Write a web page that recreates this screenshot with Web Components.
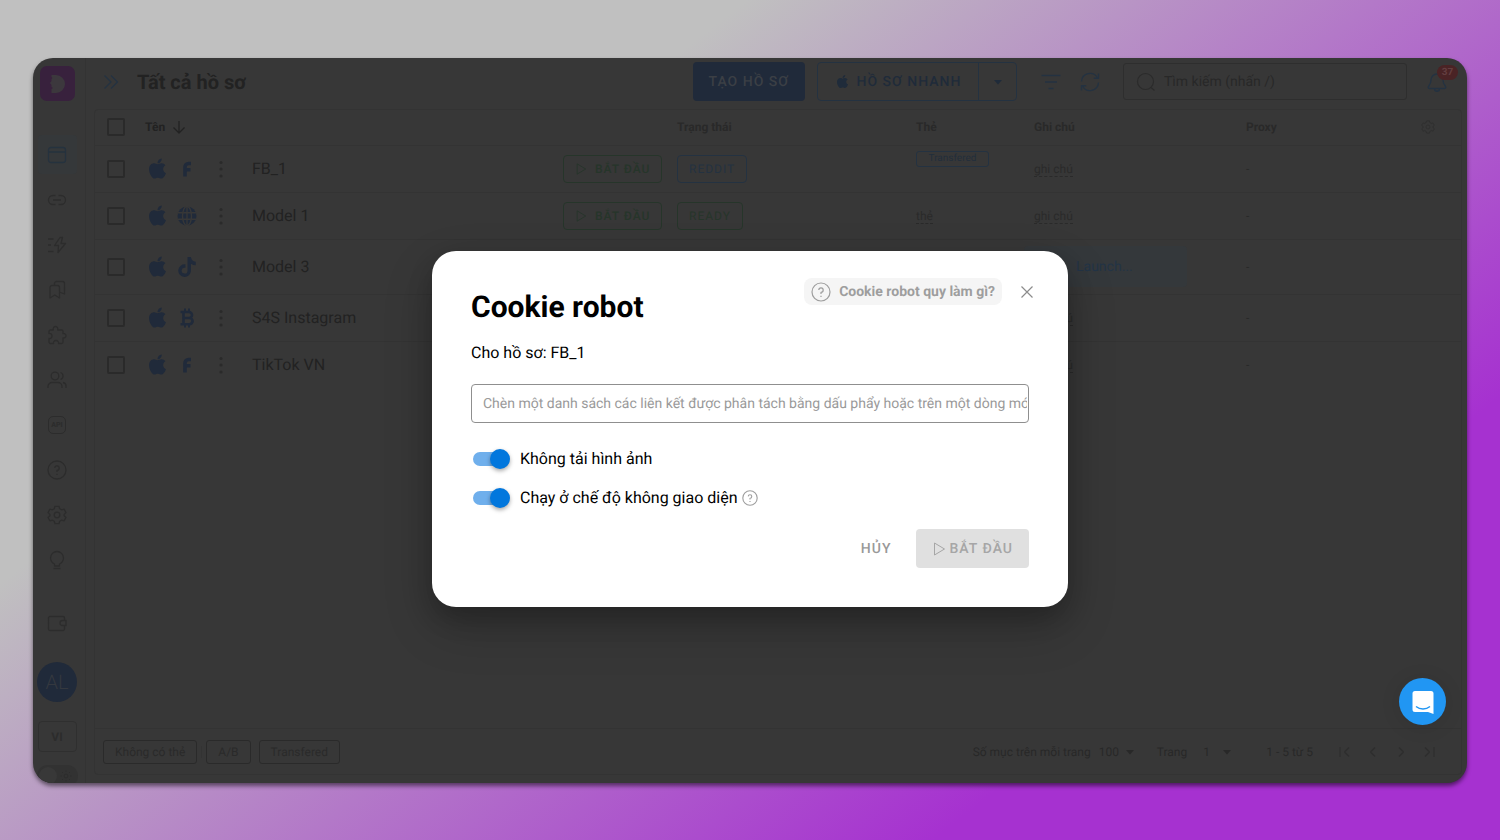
<!DOCTYPE html>
<html lang="vi">
<head>
<meta charset="UTF-8">
<meta name="viewport" content="width=device-width, initial-scale=1">
<title>Cookie robot</title>
<style>
  :root {
    --surface: #373737;
    --line: #333333;
    --outline: #2a2a2a;
    --text: #222222;
    --text-soft: #282828;
    --brand: #202a3a;
    --brand-line: #243241;
    --success: #26352a;
    --accent: #0277dd;
    --muted: #9e9e9e;
  }
  * { box-sizing: border-box; }
  body {
    margin: 0;
    height: 100vh;
    padding: 58px 33px 57px;
    font-family: Roboto, "Noto Sans", sans-serif;
    text-rendering: geometricPrecision;
    color: var(--text);
    background: linear-gradient(142deg, #c0c0c0 29%, #a631d0 78%);
  }
</style>
</head>
<body>
<app-window></app-window>

<script>
const ICONS = {
  window: ['0 0 20 20', '<rect x="1.5" y="2.5" width="17" height="15" rx="2.5"/><path d="M1.5 7h17"/>'],
  link: ['0 0 20 20', '<path d="M8.500 5.500H6a4.500 4.500 0 0 0 0 9h2.500M11.500 5.500H14a4.500 4.500 0 0 1 0 9h-2.500M6 10h8"/>'],
  bolt: ['0 0 20 20', '<path d="M13 2.500 7.500 10.500h4L11 17.500l7.500-9h-4.500l1.500-6zM1 4h5.500M1 10h3M1 16.500h5.500"/>'],
  bookmarks: ['0 0 20 20', '<path d="M3 7.500a2 2 0 0 1 2-2h5.500a2 2 0 0 1 2 2V18l-4.700-3L3 18zM7.500 5.500v-2a2 2 0 0 1 2-2h6a2 2 0 0 1 2 2V14l-5-2"/>'],
  puzzle: ['0 0 20 20', '<path d="M2 6.500a1.500 1.500 0 0 1 1.500-1.500H6.300c-.5-2 .5-3.500 2.200-3.500s2.700 1.500 2.200 3.500h3.800A1.500 1.500 0 0 1 16 6.500v2c1.800-.2 3 .7 3 2.200s-1.200 2.400-3 2.200v4.100a1.500 1.500 0 0 1-1.500 1.500h-3c.3-1.800-.6-3-2.500-3s-2.800 1.200-2.500 3h-3A1.500 1.500 0 0 1 2 17v-3.500c2 .2 3-.8 3-2.500s-1-2.700-3-2.500z"/>'],
  users: ['0 0 20 20', '<circle cx="8" cy="6" r="3.800"/><path d="M1 18v-1.500a4 4 0 0 1 4-4h6a4 4 0 0 1 4 4V18M13.500 2.500a3.700 3.700 0 0 1 0 7M16 12.500a3.700 3.700 0 0 1 3 4V18"/>'],
  help: ['0 0 20 20', '<circle cx="10" cy="10" r="9"/><path d="M7.800 8A2.200 2.200 0 1 1 10 10.300v1.700M10 13.700v1.300"/>'],
  gear: ['0 0 20 20', '<path d="M8 1.300h4l.7 2.500 1.800 1 2.500-.6 2 3.400-1.900 1.800v1.300l1.900 1.800-2 3.400-2.500-.7-1.800 1-.7 2.500H8l-.7-2.500-1.800-1-2.500.7-2-3.400 1.900-1.800V9.400L1 7.600l2-3.400 2.500.6 1.800-1z"/><circle cx="10" cy="10" r="2.800"/>'],
  bulb: ['0 0 20 20', '<path d="M7.500 16v-2A7 7 0 0 1 3.500 8a6.500 6.500 0 0 1 13 0 7 7 0 0 1-4 6v2zM6.500 18.500h7"/>'],
  wallet: ['0 0 20 20', '<path d="M17.500 7.500V5A1.500 1.500 0 0 0 16 3.500H3A1.500 1.500 0 0 0 1.500 5v11A1.500 1.500 0 0 0 3 17.500h13a1.500 1.500 0 0 0 1.500-1.500v-3.500M19 7.500h-3.500a2.500 2.500 0 0 0 0 5H19z"/>'],
  sun: ['0 0 12 12', '<circle cx="6" cy="6" r="2"/><path d="M6 .5v1.500M6 10v1.500M.5 6H2M10 6h1.500M2 2l1 1M9 9l1 1M2 10l1-1M9 3l1-1"/>'],
  expand: ['0 0 16 16', '<path d="m1.500 1.500 6.500 6.500-6.500 6.500M8 1.500 14.500 8 8 14.500"/>'],
  arrowDown: ['0 0 14 14', '<path d="M7 1v12M1.500 7.500 7 13l5.500-5.500"/>'],
  filter: ['0 0 20 20', '<path d="M.5 3.500h19M4 10h12M7.500 16.500h5"/>'],
  refresh: ['0 0 20 20', '<path d="M1.500 9.500A8.500 8.500 0 0 1 17.500 6M18.500 10.500A8.500 8.500 0 0 1 2.500 14M18.500 1.500V6.200h-4.700M1.500 18.500v-4.700h4.700"/>'],
  search: ['0 0 20 20', '<circle cx="9.500" cy="9.500" r="8"/><path d="m15 15.500 3.500 3"/>'],
  bell: ['0 0 20 20', '<path d="M2.500 16.500c-1.500 0-1.500-1.500-.7-2.500 1.700-2 2.200-3 2.200-6a6 6 0 0 1 12 0c0 3 .5 4 2.200 6 .8 1 .8 2.500-.7 2.500zM7.500 16.800a2.500 2.500 0 0 0 5 0"/>'],
  play: ['0 0 14 14', '<path d="M2.500 1v12L12.500 7z"/>'],
  close: ['0 0 16 16', '<path d="m2.500 2.500 11 11M13.500 2.500l-11 11"/>'],
  first: ['0 0 14 14', '<path d="M2 2v10M11 2.500 6.500 7l4.500 4.500"/>'],
  prev: ['0 0 14 14', '<path d="M9 2.500 4.500 7 9 11.500"/>'],
  next: ['0 0 14 14', '<path d="M5 2.500 9.500 7 5 11.500"/>'],
  last: ['0 0 14 14', '<path d="M12 2v10M3 2.500 7.500 7 3 11.500"/>'],
  caret: ['0 0 10 10', '<path d="M1 3h8L5 7.500z" fill="currentColor" stroke="none"/>'],
  dots: ['0 0 20 20', '<g fill="currentColor" stroke="none"><circle cx="10" cy="3.500" r="1.600"/><circle cx="10" cy="10" r="1.600"/><circle cx="10" cy="17" r="1.600"/></g>'],
  logo: ['0 0 20 20', '<path fill="currentColor" stroke="none" d="M4.500 1H9a9 9 0 0 1 0 18H4.500v-4l1.500-1-1.500-1v-2L3 9l1.500-2V5l1-1-1-1z"/>'],
  apple: ['0 0 384 512', '<path fill="currentColor" stroke="none" d="M318.7 268.7c-.2-36.7 16.400-64.400 50-84.800-18.800-26.900-47.200-41.700-84.700-44.600-35.500-2.800-74.300 20.700-88.500 20.700-15 0-49.400-19.700-76.400-19.700C63.300 141.200 4 184.800 4 273.500q0 39.300 14.400 81.200c12.800 36.700 59 126.700 107.200 125.200 25.200-.6 43-17.900 75.800-17.900 31.800 0 48.300 17.900 76.400 17.900 48.600-.7 90.400-82.500 102.600-119.300-65.200-30.700-61.700-90-61.700-91.900zm-56.600-164.200c27.300-32.400 24.800-61.900 24-72.500-24.100 1.400-52 16.400-67.900 34.900-17.500 19.800-27.800 44.300-25.600 71.900 26.100 2 49.900-11.400 69.500-34.300z"/>'],
  facebook: ['0 0 20 20', '<path d="M8 17.500V8A3.500 3.500 0 0 1 11.500 4.500H14M8 10.800h5.500" stroke-width="3.600"/>'],
  globe: ['0 0 20 20', '<circle cx="10" cy="10" r="9.500" fill="currentColor" stroke="none"/><path d="M.5 6.800h19M.5 13.200h19M10 .5v19" style="stroke:var(--surface)"/><ellipse cx="10" cy="10" rx="4.500" ry="9.500" style="stroke:var(--surface)"/>'],
  tiktok: ['0 0 448 512', '<path fill="currentColor" stroke="none" d="M448 209.900a210 210 0 0 1-122.800-39.200v178.700A162.600 162.600 0 1 1 185 188.300v89.900a74.600 74.600 0 1 0 52.200 71.200V0h88a121 121 0 0 0 1.900 22.200A122 122 0 0 0 381 102.400a121 121 0 0 0 67 20.100z"/>'],
  bitcoin: ['0 0 20 20', '<path d="M3.500 4H12a3 3 0 0 1 0 6H6.500M12 10h.5a3 3 0 0 1 0 6.200h-9M6.500 4v12" stroke-width="2.600"/><path d="M8 .5V4M12 .5V4M8 16v3.500M12 16v3.500" stroke-width="2"/>'],
  chat: ['0 0 24 24', '<path fill="#fff" stroke="none" d="M4 1h16a2.500 2.500 0 0 1 2.500 2.500V24l-5.500-2H4a2.500 2.500 0 0 1-2.500-2.500v-16A2.500 2.500 0 0 1 4 1z"/><path d="M5 16.500c4 3.300 10 3.300 14 0" stroke="#2196f3" stroke-width="1.400"/>'],
};

/**
 * Base class: attaches the open shadow root and renders the template.
 */
class BaseElement extends HTMLElement {
  constructor() {
    super();
    this.attachShadow({ mode: "open" });
  }

  connectedCallback() {
    this.shadowRoot.innerHTML = `<style>
      *, :host { box-sizing: border-box; }
      button, input, select { font: inherit; color: inherit; margin: 0; text-rendering: inherit; }
      button { background: none; border: 0; padding: 0; }
      ${this.styles()}
    </style>${this.template()}`;
  }
}

/** Inline SVG icon. Attributes: name, size, weight */
class AppIcon extends BaseElement {
  styles() {
    const size = this.getAttribute("size") || 20;
    return `
      :host { display: inline-flex; flex: none; }
      svg { width: ${size}px; height: ${size}px; fill: none; stroke: currentColor;
            stroke-width: ${this.getAttribute("weight") || "1.4"}; stroke-linejoin: round; }`;
  }
  template() {
    const [box, shape] = ICONS[this.getAttribute("name")];
    return `<svg viewBox="${box}" aria-hidden="true">${shape}</svg>`;
  }
}

/** Button. Variants: solid, small, status, link, disabled */
class AppButton extends BaseElement {
  styles() {
    return `
      :host { display: inline-flex; vertical-align: middle; }
      button {
        display: flex; align-items: center; justify-content: center; gap: 8px;
        height: 39px; padding: 0 16px; border-radius: 4px;
        font-size: 14px; font-weight: 500; letter-spacing: 1px; white-space: nowrap;
      }
      :host([variant="solid"]) button { background: var(--brand); color: #3b3f45; }
      :host([variant="small"]) button, :host([variant="status"]) button {
        height: 28px; padding: 0 11px; font-size: 12px; border: 1px solid currentColor;
      }
      :host([variant="status"]) button { font-weight: 400; }
      :host([variant="link"]) button { color: #999; }
      :host([variant="disabled"]) button { background: #e0e0e0; color: #a6a6a6; gap: 4px; }`;
  }
  template() {
    const disabled = this.getAttribute("variant") === "disabled" ? "disabled" : "";
    return `<button type="button" ${disabled}><slot></slot></button>`;
  }
}

class AppSidebar extends BaseElement {
  styles() {
    return `
      :host {
        display: flex; flex-direction: column; align-items: center; flex: none;
        width: 53px; padding: 8px 4px 0 0; overflow: hidden;
        border-right: 1px solid var(--line); color: #2c2c2c;
      }
      :host > * { flex: none; }
      .logo { display: grid; place-items: center; width: 35px; height: 35px; border-radius: 7px; background: #38213d; color: #3c383d; }
      nav { display: flex; flex-direction: column; gap: 6px; margin: 34px 0 24px; }
      a { display: grid; place-items: center; width: 39px; height: 39px; border-radius: 4px; color: inherit; text-decoration: none; }
      a.active { background: #35383a; color: #25323e; }
      .api { width: 18px; height: 18px; border: 1px solid currentColor; border-radius: 5px; font-size: 7px; font-weight: 900; line-height: 16px; text-align: center; }
      .avatar { width: 40px; height: 40px; margin: 20px 0 19px; border-radius: 50%; background: var(--brand); color: #34383f; font-size: 20px; font-weight: 300; }
      .lang { width: 39px; height: 31px; border: 1px solid #2f2f2f; border-radius: 4px; font-size: 12px; font-weight: 700; }
      .theme { display: flex; align-items: center; justify-content: space-between; width: 41px; height: 22px; margin-top: 13px; padding: 0 6px 0 2px; border-radius: 11px; background: #323232; }
      .theme::before { content: ""; width: 18px; height: 18px; border-radius: 50%; background: #383838; }`;
  }
  template() {
    const items = [
      ["window", "Hồ sơ"], ["link", "Proxy"], ["bolt", "Tự động hóa"], ["bookmarks", "Dấu trang"], ["puzzle", "Tiện ích"],
      ["users", "Nhóm"], ["api", "API"], ["help", "Trợ giúp"], ["gear", "Cài đặt"], ["bulb", "Ý tưởng"],
    ];
    const links = items.map(([icon, label], i) => `
      <a href="#${icon}" aria-label="${label}" class="${i === 0 ? "active" : ""}">
        ${icon === "api" ? '<span class="api">API</span>' : `<app-icon name="${icon}" weight="1.3"></app-icon>`}
      </a>`).join("");
    return `
      <div class="logo"><app-icon name="logo"></app-icon></div>
      <nav>${links}</nav>
      <a href="#wallet" aria-label="Ví"><app-icon name="wallet" weight="1.3"></app-icon></a>
      <button type="button" class="avatar">AL</button>
      <button type="button" class="lang">VI</button>
      <button type="button" class="theme" aria-label="Giao diện"><app-icon name="sun" size="12" weight="1"></app-icon></button>`;
  }
}

class TopBar extends BaseElement {
  styles() {
    return `
      :host { display: flex; align-items: center; height: 51px; padding: 0 20px 4px 17px; flex: none; }
      .icon { display: grid; place-items: center; color: var(--brand-line); }
      h1 { flex: 1; margin: 0 0 0 18px; font-size: 20px; line-height: 24px; font-weight: 700; }
      .split { display: flex; margin: 0 24px 0 12px; border: 1px solid var(--brand-line); border-radius: 4px; height: 39px; align-items: stretch; color: #1f2b3a; }
      .split button { display: flex; align-items: center; justify-content: center; gap: 7px; font-size: 14px; font-weight: 500; letter-spacing: 1px; }
      .quick { width: 160px; }
      .more { width: 38px; border-left: 1px solid var(--brand-line); }
      .search { display: flex; align-items: center; gap: 8px; width: 284px; height: 37px; margin: 0 20px 0 23px; padding: 0 12px; border: 1px solid #2e2e2e; border-radius: 3px; color: #2b2b2b; }
      input { flex: 1; min-width: 0; border: 0; padding: 0; background: none; font-size: 14px; outline: 0; }
      input::placeholder { color: #282828; opacity: 1; }
      .filter { margin-right: 19px; }
      .bell { position: relative; }
      .badge { position: absolute; left: 10px; top: -7px; width: 21px; height: 15px; border-radius: 8px; background: #4a2325; color: #633e40; font-size: 10px; line-height: 15px; font-weight: 700; text-align: center; }`;
  }
  template() {
    return `
      <button type="button" class="icon" aria-label="Mở rộng"><app-icon name="expand" size="16" weight="1.3"></app-icon></button>
      <h1>Tất cả hồ sơ</h1>
      <app-button variant="solid">TẠO HỒ SƠ</app-button>
      <div class="split">
        <button type="button" class="quick"><app-icon name="apple" size="15"></app-icon>HỒ SƠ NHANH</button>
        <button type="button" class="more" aria-label="Thêm"><app-icon name="caret" size="10"></app-icon></button>
      </div>
      <button type="button" class="icon filter" aria-label="Lọc"><app-icon name="filter"></app-icon></button>
      <button type="button" class="icon" aria-label="Tải lại"><app-icon name="refresh"></app-icon></button>
      <label class="search"><app-icon name="search" size="20" weight="1.2"></app-icon><input type="search" aria-label="Tìm kiếm" placeholder="Tìm kiếm (nhấn /)"></label>
      <button type="button" class="icon bell" aria-label="Thông báo"><app-icon name="bell"></app-icon><span class="badge">37</span></button>`;
  }
}

/** Table of browser profiles */
class ProfileTable extends BaseElement {
  styles() {
    return `
      :host { display: block; flex: 1; min-height: 0; overflow: hidden; }
      table { width: 100%; table-layout: fixed; border-collapse: collapse; }
      th, td { padding: 0; text-align: left; vertical-align: middle; }
      th { height: 35px; font-size: 12px; font-weight: 700; color: #292929; }
      td { height: 47px; font-size: 12px; color: var(--text-soft); }
      tr { border-bottom: 1px solid var(--line); }
      tbody tr:last-child { border: 0; }
      tr.tall td { height: 55px; }
      th span { display: flex; align-items: center; gap: 7px; }
      th .name { color: var(--text); }
      input { appearance: none; display: block; width: 18px; height: 18px; margin-left: 12px; border: 2px solid var(--outline); border-radius: 2px; }
      .os { display: flex; align-items: center; gap: 8px; padding-left: 1px; color: var(--brand); }
      .os button { display: flex; color: var(--outline); margin-left: 6px; }
      .profile { font-size: 16px; color: var(--text); }
      .start { color: var(--success); }
      .reddit { color: var(--brand-line); }
      .tag { vertical-align: top; padding-top: 5px; }
      .chip { display: block; width: 73px; height: 16px; border: 1px solid var(--brand-line); border-radius: 3px; color: #222e3b; font-size: 10px; line-height: 14px; text-align: center; }
      .edit { border-bottom: 1px dashed currentColor; color: #2a2a2a; }
      .note { display: flex; align-items: center; width: 163px; height: 41px; margin-left: -10px; padding-left: 52px; border-radius: 4px; background: #34383b; color: #233446; font-size: 14px; }
      .gear { display: flex; padding-left: 8px; color: #2e2e2e; }`;
  }
  template() {
    const edit = (text) => `<span class="edit">${text}</span>`;
    const rows = [
      { name: "FB_1", icon: "facebook", status: "REDDIT", tone: "reddit", tag: '<span class="chip">Transfered</span>' },
      { name: "Model 1", icon: "globe", status: "READY", tone: "start", tag: edit("thẻ") },
      { name: "Model 3", icon: "tiktok", note: '<span class="note">Launch...</span>' },
      { name: "S4S Instagram", icon: "bitcoin" },
      { name: "TikTok VN", icon: "facebook" },
    ];
    const body = rows.map((row, i) => `
      <tr class="${row.note ? "tall" : ""}">
        <td><input type="checkbox" aria-label="Chọn ${row.name}"></td>
        <td><div class="os">
          <app-icon name="apple" size="23"></app-icon><app-icon name="${row.icon}" size="20"></app-icon>
          <button type="button" aria-label="Menu ${row.name}"><app-icon name="dots" size="20"></app-icon></button>
        </div></td>
        <td class="profile">${row.name}</td>
        <td>${row.status ? '<app-button variant="small" class="start"><app-icon name="play" size="12" weight="1"></app-icon>BẮT ĐẦU</app-button>' : ""}</td>
        <td>${row.status ? `<app-button variant="status" class="${row.tone}">${row.status}</app-button>` : ""}</td>
        <td class="${i === 0 ? "tag" : ""}">${row.tag || ""}</td>
        <td>${row.note || edit("ghi chú")}</td>
        <td>-</td>
        <td></td>
      </tr>`).join("");
    return `
      <table>
        <colgroup>
          <col style="width:50px"><col style="width:107px"><col><col style="width:114px"><col style="width:239px">
          <col style="width:118px"><col style="width:212px"><col style="width:167px"><col style="width:48px">
        </colgroup>
        <thead><tr>
          <th><input type="checkbox" aria-label="Chọn tất cả"></th>
          <th><span class="name">Tên <app-icon name="arrowDown" size="14" weight="1.3"></app-icon></span></th>
          <th></th><th></th><th>Trạng thái</th><th>Thẻ</th><th>Ghi chú</th><th>Proxy</th>
          <th><button type="button" class="gear" aria-label="Cột"><app-icon name="gear" size="14" weight="1.2"></app-icon></button></th>
        </tr></thead>
        <tbody>${body}</tbody>
      </table>`;
  }
}

/** Tag filters and pagination under the table */
class TableFooter extends BaseElement {
  styles() {
    return `
      :host { display: flex; align-items: center; flex: none; height: 46px; padding: 0 22px 0 8px; border-top: 1px solid var(--line); font-size: 12px; color: var(--text-soft); }
      .chip { height: 24px; padding: 0 11px; border: 1px solid var(--outline); border-radius: 3px; color: #2a2a2a; }
      .line { width: 1px; height: 12px; margin: 0 4px; background: var(--line); }
      .chip + .chip { margin-left: 8px; }
      .pager { display: flex; align-items: center; margin-left: auto; }
      .select { display: flex; align-items: center; justify-content: space-between; width: 36px; margin: 0 22px 0 8px; }
      .page { width: 29px; margin: 0 34px 0 16px; }
      select { appearance: none; border: 0; padding: 0; background: none; }
      .range { margin-right: 22px; }
      .steps { display: flex; gap: 8px; color: #2e2e2e; }
      .steps button { display: grid; place-items: center; width: 20px; height: 20px; }`;
  }
  template() {
    const step = (name, label) => `<button type="button" aria-label="${label}"><app-icon name="${name}" size="14" weight="1.2"></app-icon></button>`;
    return `
      <button type="button" class="chip">Không có thẻ</button>
      <span class="line"></span>
      <button type="button" class="chip">A/B</button>
      <button type="button" class="chip">Transfered</button>
      <div class="pager">
        <label for="size">Số mục trên mỗi trang</label>
        <span class="select"><select id="size"><option>100</option></select><app-icon name="caret" size="10"></app-icon></span>
        <label for="page">Trang</label>
        <span class="select page"><select id="page"><option>1</option></select><app-icon name="caret" size="10"></app-icon></span>
        <span class="range">1 - 5 từ 5</span>
        <div class="steps">${step("first", "Trang đầu")}${step("prev", "Trang trước")}${step("next", "Trang sau")}${step("last", "Trang cuối")}</div>
      </div>`;
  }
}

/** Switch with a slotted label */
class ToggleSwitch extends BaseElement {
  styles() {
    return `
      :host { display: block; }
      label { display: flex; align-items: center; gap: 10px; height: 39px; font-size: 16px; }
      input { appearance: none; display: grid; align-items: center; width: 37px; height: 20px; margin-left: 2px; }
      input::before, input::after { content: ""; grid-area: 1 / 1; }
      input::before { width: 34px; height: 14px; border-radius: 7px; background: #6fafec; }
      input::after { width: 20px; height: 20px; border-radius: 50%; background: var(--accent); box-shadow: 0 2px 4px rgba(0, 0, 0, .35); }
      input:checked::after { justify-self: end; }
      .text { display: flex; align-items: center; gap: 4px; }`;
  }
  template() {
    return `<label><input type="checkbox" role="switch" checked><span class="text"><slot></slot></span></label>`;
  }
}

class CookieDialog extends BaseElement {
  styles() {
    return `
      :host { position: absolute; inset: 0; display: grid; place-items: center; padding-top: 17px; }
      section { width: 636px; max-width: 100%; padding: 27px 39px 39px; border-radius: 24px; background: #fff; color: #000; box-shadow: 0 11px 24px rgba(0, 0, 0, .2), 0 20px 50px rgba(0, 0, 0, .2); }
      header { display: flex; align-items: flex-start; margin-right: -6px; }
      h2 { flex: 1; margin: 10px 0 0; font-size: 30px; line-height: 40px; font-weight: 700; }
      .help { display: flex; align-items: center; gap: 8px; height: 27px; padding: 0 7px; border-radius: 8px; background: #f5f5f5; color: var(--muted); font-size: 14px; font-weight: 700; }
      .close { display: grid; place-items: center; height: 27px; margin-left: 17px; color: #8c8c8c; }
      p { margin: 13px 0 19px; font-size: 16px; line-height: 24px; }
      .links { display: block; width: 100%; height: 39px; padding: 0 1px 0 11px; border: 1px solid #8f8f8f; border-radius: 4px; font-size: 14px; margin-bottom: 16px; }
      .links::placeholder { color: #9a9a9a; opacity: 1; }
      .hint { color: var(--muted); }
      footer { display: flex; justify-content: flex-end; gap: 8px; margin-top: 12px; }`;
  }
  template() {
    return `
      <section role="dialog" aria-labelledby="title">
        <header>
          <h2 id="title">Cookie robot</h2>
          <button type="button" class="help"><app-icon name="help" size="20" weight="1.2"></app-icon>Cookie robot quy làm gì?</button>
          <button type="button" class="close" aria-label="Đóng"><app-icon name="close" size="16" weight="1.2"></app-icon></button>
        </header>
        <p>Cho hồ sơ: FB_1</p>
        <input class="links" type="text" aria-label="Danh sách liên kết" placeholder="Chèn một danh sách các liên kết được phân tách bằng dấu phẩy hoặc trên một dòng mới">
        <toggle-switch>Không tải hình ảnh</toggle-switch>
        <toggle-switch>Chạy ở chế độ không giao diện <app-icon class="hint" name="help" size="16"></app-icon></toggle-switch>
        <footer>
          <app-button variant="link">HỦY</app-button>
          <app-button variant="disabled"><app-icon name="play" size="14" weight="1"></app-icon>BẮT ĐẦU</app-button>
        </footer>
      </section>`;
  }
}

class ChatLauncher extends BaseElement {
  styles() {
    return `
      :host { position: absolute; right: 21px; bottom: 58px; }
      button { display: grid; place-items: center; width: 47px; height: 47px; border-radius: 50%; background: #2196f3; box-shadow: 0 2px 20px rgba(0, 0, 0, .1); }`;
  }
  template() {
    return `<button type="button" aria-label="Trò chuyện"><app-icon name="chat" size="24"></app-icon></button>`;
  }
}

class AppWindow extends BaseElement {
  styles() {
    return `
      :host {
        position: relative; display: flex; height: 100%; overflow: hidden;
        border-radius: 20px; background: var(--surface); box-shadow: 0 3px 4px rgba(0, 0, 0, .5);
      }
      main { display: flex; flex-direction: column; flex: 1; min-width: 0; padding-bottom: 8px; }
      .card { display: flex; flex-direction: column; flex: 1; min-height: 0; margin: 0 5px 0 8px; border: 1px solid var(--line); border-radius: 4px; }`;
  }
  template() {
    return `
      <app-sidebar></app-sidebar>
      <main>
        <top-bar></top-bar>
        <div class="card">
          <profile-table></profile-table>
          <table-footer></table-footer>
        </div>
      </main>
      <cookie-dialog></cookie-dialog>
      <chat-launcher></chat-launcher>`;
  }
}

customElements.define("app-icon", AppIcon);
customElements.define("app-button", AppButton);
customElements.define("app-sidebar", AppSidebar);
customElements.define("top-bar", TopBar);
customElements.define("profile-table", ProfileTable);
customElements.define("table-footer", TableFooter);
customElements.define("toggle-switch", ToggleSwitch);
customElements.define("cookie-dialog", CookieDialog);
customElements.define("chat-launcher", ChatLauncher);
customElements.define("app-window", AppWindow);
</script>
</body>
</html>
